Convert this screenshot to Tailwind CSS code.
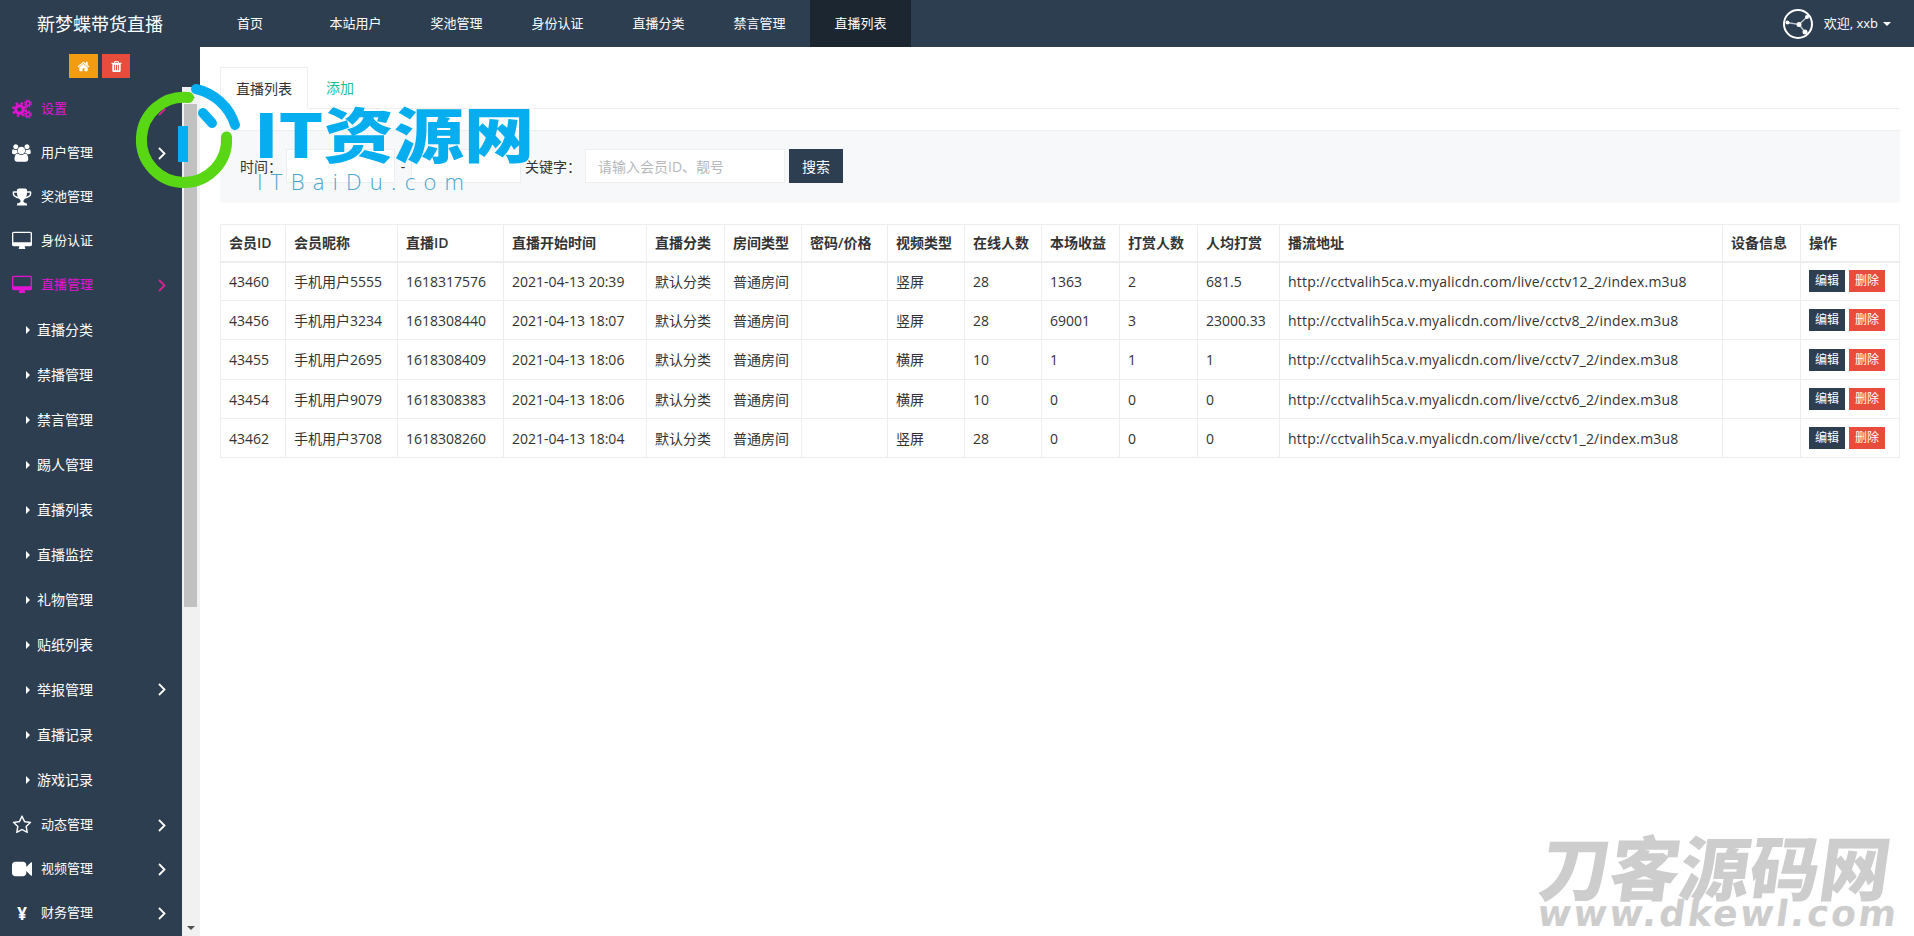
<!DOCTYPE html>
<html lang="zh-CN">
<head>
  <meta charset="UTF-8" />
  <title>直播列表</title>
  <script src="https://cdn.jsdelivr.net/npm/@tailwindcss/browser@4"></script>
</head>
<body class="relative h-[936px] w-[1914px] overflow-hidden bg-white text-[14px] text-[#333] font-['Open_Sans','Noto_Sans_CJK_SC',sans-serif]">

  <!-- HEADER -->
  <header class="flex h-[47px] items-center bg-[#2c3e50] text-white">
    <div class="w-[212px] pl-[37px] text-[18px] leading-none">新梦蝶带货直播</div>
    <nav class="flex h-full text-[13px]">
      <a class="flex w-[93px] items-center pl-[25px]">首页</a>
      <a class="flex w-[101px] items-center justify-center">本站用户</a>
      <a class="flex w-[101px] items-center justify-center">奖池管理</a>
      <a class="flex w-[101px] items-center justify-center">身份认证</a>
      <a class="flex w-[101px] items-center justify-center">直播分类</a>
      <a class="flex w-[101px] items-center justify-center">禁言管理</a>
      <a class="flex w-[101px] items-center justify-center bg-[#1b2631]">直播列表</a>
    </nav>
    <div class="ml-auto flex items-center pr-[23px]">
      <svg class="h-[30px] w-[30px]" viewBox="0 0 30 30" fill="none">
        <circle cx="15" cy="15" r="14" stroke="#fff" stroke-width="2" />
        <path d="M4 13.5L16 15.5L24 8M16 15.5L22 23" stroke="#b8c0c8" stroke-width="1.5" />
        <circle cx="4.5" cy="13.5" r="2" fill="#fff" />
        <circle cx="16" cy="15.5" r="2.5" fill="#fff" />
        <circle cx="24" cy="8" r="2" fill="#fff" />
        <circle cx="22" cy="23" r="2.5" fill="#fff" />
      </svg>
      <span class="ml-[11px] text-[13px]">欢迎, xxb</span>
      <span class="ml-[5px] h-0 w-0 border-x-[4px] border-t-[4px] border-x-transparent border-t-white"></span>
    </div>
  </header>

  <div class="flex h-[889px]">

    <!-- SIDEBAR -->
    <aside class="flex w-[200px] shrink-0 flex-col bg-[#2c3e50] text-white">
      <div class="flex h-[40px] gap-[4px] pl-[69px] pt-[7px]">
        <span class="flex h-[24px] w-[29px] items-center justify-center bg-[#f39c12]">
          <svg class="h-[13px] w-[13px]" viewBox="0 0 1792 1792" fill="#fff"><path d="M1472 992v480q0 26-19 45t-45 19h-384v-384h-256v384h-384q-26 0-45-19t-19-45v-480q0-1 .5-3t.5-3l575-474 575 474q1 2 1 6zm223-69l-62 74q-8 9-21 11h-3q-13 0-21-7l-692-577-692 577q-12 8-24 7-13-2-21-11l-62-74q-8-10-7-23.5t11-21.5l719-599q32-26 76-26t76 26l244 204v-195q0-14 9-23t23-9h192q14 0 23 9t9 23v408l219 182q10 8 11 21.5t-7 23.5z" /></svg>
        </span>
        <span class="flex h-[24px] w-[28px] items-center justify-center bg-[#e74c3c]">
          <svg class="h-[13px] w-[13px]" viewBox="0 0 1792 1792" fill="#fff"><path d="M704 1376v-704q0-14-9-23t-23-9h-64q-14 0-23 9t-9 23v704q0 14 9 23t23 9h64q14 0 23-9t9-23zm256 0v-704q0-14-9-23t-23-9h-64q-14 0-23 9t-9 23v704q0 14 9 23t23 9h64q14 0 23-9t9-23zm256 0v-704q0-14-9-23t-23-9h-64q-14 0-23 9t-9 23v704q0 14 9 23t23 9h64q14 0 23-9t9-23zm-544-992h448l-48-117q-7-9-17-11h-317q-10 2-17 11zm928 32v64q0 14-9 23t-23 9h-96v948q0 83-47 143.5t-113 60.5h-832q-66 0-113-58.5t-47-141.5v-952h-96q-14 0-23-9t-9-23v-64q0-14 9-23t23-9h309l70-167q15-37 54-63t79-26h320q40 0 79 26t54 63l70 167h309q14 0 23 9t9 23z" /></svg>
        </span>
      </div>

      <div class="flex min-h-0 flex-1">
        <ul id="menu" class="w-[182px] shrink-0 overflow-hidden"></ul>

        <!-- scrollbar -->
        <div class="flex w-[18px] flex-col bg-[#f1f1f1] pl-[2px] pr-[3px]">
          <div class="flex h-[17px] items-center justify-center">
            <span class="h-0 w-0 border-x-[4px] border-b-[4px] border-x-transparent border-b-[#505050]"></span>
          </div>
          <div class="h-[503px] bg-[#c1c1c1]"></div>
          <div class="mt-auto flex h-[17px] items-center justify-center">
            <span class="h-0 w-0 border-x-[4px] border-t-[4px] border-x-transparent border-t-[#505050]"></span>
          </div>
        </div>
      </div>
    </aside>

    <!-- MAIN CONTENT -->
    <main class="min-w-0 flex-1 pl-[20px] pr-[14px] pt-[20px]">
      <div class="flex h-[42px] border-b border-[#eee]">
        <a class="flex h-[42px] w-[88px] items-center justify-center border border-b-white border-[#eee] bg-white">直播列表</a>
        <a class="flex w-[64px] items-center justify-center text-[#1abc9c]">添加</a>
      </div>

      <form class="mt-[21px] flex h-[73px] items-center border-t border-[#eee] bg-[#f7f8fa] pb-[2px] pl-[20px]">
        <label class="w-[46px]">时间：</label>
        <input class="h-[34px] w-[109px] border border-[#eee] bg-white" />
        <span class="w-[16px] text-center">-</span>
        <input class="h-[34px] w-[110px] border border-[#eee] bg-white" />
        <label class="ml-[4px] w-[60px]">关键字：</label>
        <input class="h-[34px] w-[200px] border border-[#eee] bg-white px-[12px] placeholder:text-[#b5b9bd]" placeholder="请输入会员ID、靓号" />
        <button type="button" class="ml-[4px] h-[34px] w-[54px] bg-[#2c3e50] text-white">搜索</button>
      </form>

      <table class="mt-[21px] w-[1679px] table-fixed border-collapse">
        <thead>
          <tr id="head" class="h-[37px]"></tr>
        </thead>
        <tbody id="rows"></tbody>
      </table>
    </main>
  </div>

  <!-- LOGO WATERMARK -->
  <div class="pointer-events-none absolute left-[136px] top-[87px] h-[110px] w-[400px]">
    <svg class="absolute left-0 top-0 h-[102px] w-[104px] overflow-visible" viewBox="0 0 104 102" fill="none">
      <path d="M52.5 10.5A42.6 42.6 0 1 0 90.5 50" stroke="#5ad714" stroke-width="11" stroke-linecap="round" />
      <path d="M60 2A53 53 0 0 1 99 38" stroke="#06aeef" stroke-width="10" stroke-linecap="round" />
      <path d="M67 26L76 36" stroke="#06aeef" stroke-width="10" stroke-linecap="round" />
      <rect x="42" y="39" width="10" height="36" fill="#06aeef" />
    </svg>
    <div class="absolute left-[118px] top-[9px] origin-left scale-x-[1.17] whitespace-nowrap text-[60px] font-black leading-[72px] text-[#06aeef] font-['Noto_Sans_CJK_SC',sans-serif]">IT资源网</div>
    <div class="absolute left-[121px] top-[81px] whitespace-nowrap text-[22px] font-light leading-[26px] tracking-[8.3px] text-[#4ba6cf] font-['Open_Sans',sans-serif]">ITBaiDu.com</div>
  </div>

  <div class="pointer-events-none absolute left-[1541px] top-[830px] w-[360px] text-[#cdcdcd]">
    <div class="-skew-x-[8deg] whitespace-nowrap text-[70px] font-black leading-[70px] font-['Noto_Sans_CJK_SC',sans-serif]">刀客源码网</div>
    <div class="-ml-[3px] -skew-x-[8deg] whitespace-nowrap text-[36px] font-bold leading-[27px] tracking-[2.6px] font-['DejaVu_Sans',sans-serif]">www.dkewl.com</div>
  </div>

  <!-- SCRIPTS -->
  <script>
    const fa = {
      users: ['-64 0 2048 1792', 'M529 896q-162 5-265 128h-134q-82 0-138-40.5t-56-118.5q0-353 124-353 6 0 43.5 21t97.5 42.5 119 21.5q67 0 133-23-5 37-5 66 0 139 81 256zm1071 637q0 120-73 189.5t-194 69.5h-874q-121 0-194-69.5t-73-189.5q0-53 3.5-103.5t14-109 26.5-108.5 43-97.5 62-81 85.5-53.5 111.5-20q10 0 43 21.5t73 48 107 48 135 21.5 135-21.5 107-48 73-48 43-21.5q61 0 111.5 20t85.5 53.5 62 81 43 97.5 26.5 108.5 14 109 3.5 103.5zm-1024-1277q0 106-75 181t-181 75-181-75-75-181 75-181 181-75 181 75 75 181zm704 384q0 159-112.5 271.5t-271.5 112.5-271.5-112.5-112.5-271.5 112.5-271.5 271.5-112.5 271.5 112.5 112.5 271.5zm576 225q0 78-56 118.5t-138 40.5h-134q-103-123-265-128 81-117 81-256 0-29-5-66 66 23 133 23 59 0 119-21.5t97.5-42.5 43.5-21q124 0 124 353zm-128-609q0 106-75 181t-181 75-181-75-75-181 75-181 181-75 181 75 75 181z'],
      trophy: ['0 0 1792 1792', 'M522 883q-74-162-74-371h-256v96q0 78 94.5 162t235.5 113zm1078-275v-96h-256q0 209-74 371 141-29 235.5-113t94.5-162zm128-128v128q0 71-41.5 143t-112 130-173 97.5-215.5 44.5q-42 54-95 95-38 34-52.5 72.5t-14.5 89.5q0 54 30.5 91t97.5 37q75 0 133.5 45.5t58.5 114.5v64q0 14-9 23t-23 9h-832q-14 0-23-9t-9-23v-64q0-69 58.5-114.5t133.5-45.5q67 0 97.5-37t30.5-91q0-51-14.5-89.5t-52.5-72.5q-53-41-95-95-113-5-215.5-44.5t-173-97.5-112-130-41.5-143v-128q0-40 28-68t68-28h288v-96q0-66 47-113t113-47h576q66 0 113 47t47 113v96h288q40 0 68 28t28 68z'],
      desktop: ['0 0 1920 1792', 'M1792 992v-832q0-13-9.5-22.5t-22.5-9.5h-1600q-13 0-22.5 9.5t-9.5 22.5v832q0 13 9.5 22.5t22.5 9.5h1600q13 0 22.5-9.5t9.5-22.5zm128-832v1088q0 66-47 113t-113 47h-544q0 37 16 77.5t32 71 16 43.5q0 26-19 45t-45 19h-512q-26 0-45-19t-19-45q0-14 16-44t32-70 16-78h-544q-66 0-113-47t-47-113v-1088q0-66 47-113t113-47h1600q66 0 113 47t47 113z'],
      star: ['0 0 1792 1792', 'M1201 1004l306-297-422-62-189-382-189 382-422 62 306 297-73 421 378-199 377 199zm527-357q0 22-26 48l-363 354 86 500q1 7 1 20 0 50-41 50-19 0-40-12l-449-236-449 236q-22 12-40 12-21 0-31.5-14.5t-10.5-35.5q0-6 2-20l86-500-364-354q-25-27-25-48 0-37 56-46l502-73 225-455q19-41 49-41t49 41l225 455 502 73q56 9 56 46z'],
      video: ['0 0 1792 1792', 'M1792 352v1088q0 42-39 59-13 5-25 5-27 0-45-19l-403-403v166q0 119-84.5 203.5t-203.5 84.5h-704q-119 0-203.5-84.5t-84.5-203.5v-704q0-119 84.5-203.5t203.5-84.5h704q119 0 203.5 84.5t84.5 203.5v165l403-402q18-19 45-19 12 0 25 5 39 17 39 59z'],
    };

    function icon(name) {
      if (name === 'cogs') {
        return `<svg class="h-[20px] w-[20px]" viewBox="0 0 20 20" fill="none" stroke="currentColor">
          <circle cx="7.5" cy="10.5" r="3.8" stroke-width="3" />
          <circle cx="7.5" cy="10.5" r="6.3" stroke-width="2.4" stroke-dasharray="2.4 2.6" />
          <circle cx="16" cy="4.5" r="2" stroke-width="1.6" />
          <circle cx="16" cy="4.5" r="3.3" stroke-width="1.4" stroke-dasharray="1.4 1.2" />
          <circle cx="16" cy="15.5" r="2" stroke-width="1.6" />
          <circle cx="16" cy="15.5" r="3.3" stroke-width="1.4" stroke-dasharray="1.4 1.2" />
        </svg>`;
      }
      if (name === 'yen') {
        return `<span class="w-[20px] text-center text-[17px] font-bold leading-none">¥</span>`;
      }
      const [box, d] = fa[name];
      return `<svg class="h-[20px] w-[20px]" viewBox="${box}" fill="currentColor"><path d="${d}" /></svg>`;
    }

    const chevron = (active) => `<svg class="absolute left-[158px] h-[13px] w-[8px] ${active ? 'text-[#d6248f]' : ''}" viewBox="0 0 8 13" fill="none" stroke="currentColor" stroke-width="1.8"><path d="M1 1l5.5 5.5L1 12" /></svg>`;

    // [text, icon, has chevron, active]
    const top1 = [
      ['设置', 'cogs', true, true],
      ['用户管理', 'users', true],
      ['奖池管理', 'trophy'],
      ['身份认证', 'desktop'],
      ['直播管理', 'desktop', true, true],
    ];
    const subs = [
      ['直播分类'], ['禁播管理'], ['禁言管理'], ['踢人管理'], ['直播列表'], ['直播监控'],
      ['礼物管理'], ['贴纸列表'], ['举报管理', true], ['直播记录'], ['游戏记录'],
    ];
    const top2 = [
      ['动态管理', 'star', true],
      ['视频管理', 'video', true],
      ['财务管理', 'yen', true],
    ];

    const topRow = ([text, ic, more, active]) => `<li class="relative flex h-[44px] items-center pl-[12px] text-[13px] ${active ? 'text-[#e313d3]' : 'text-white'}">
      ${icon(ic)}<span class="ml-[9px]">${text}</span>${more ? chevron(active) : ''}</li>`;
    const subRow = ([text, more]) => `<li class="relative flex h-[45px] items-center pl-[26px] text-[14px] text-white">
      <span class="h-0 w-0 border-y-[4px] border-l-[4px] border-y-transparent border-l-white"></span>
      <span class="ml-[7px]">${text}</span>${more ? chevron() : ''}</li>`;

    document.getElementById('menu').innerHTML =
      top1.map(topRow).join('') + subs.map(subRow).join('') + `<li class="h-[1px]"></li>` + top2.map(topRow).join('');

    const columns = [
      ['会员ID', 65], ['会员昵称', 112], ['直播ID', 106], ['直播开始时间', 143], ['直播分类', 78],
      ['房间类型', 77], ['密码/价格', 86], ['视频类型', 77], ['在线人数', 77], ['本场收益', 78],
      ['打赏人数', 78], ['人均打赏', 82], ['播流地址', 443], ['设备信息', 78], ['操作', 99],
    ];
    document.getElementById('head').innerHTML = columns.map(([name, w]) =>
      `<th class="border border-b-2 border-[#eee] px-[8px] text-left font-semibold" style="width:${w}px">${name}</th>`).join('');

    const data = [
      ['43460', '手机用户5555', '1618317576', '2021-04-13 20:39', '竖屏', '28', '1363', '2', '681.5', 'cctv12_2', 'h-[39px]'],
      ['43456', '手机用户3234', '1618308440', '2021-04-13 18:07', '竖屏', '28', '69001', '3', '23000.33', 'cctv8_2', 'h-[39px]'],
      ['43455', '手机用户2695', '1618308409', '2021-04-13 18:06', '横屏', '10', '1', '1', '1', 'cctv7_2', 'h-[40px]'],
      ['43454', '手机用户9079', '1618308383', '2021-04-13 18:06', '横屏', '10', '0', '0', '0', 'cctv6_2', 'h-[39px]'],
      ['43462', '手机用户3708', '1618308260', '2021-04-13 18:04', '竖屏', '28', '0', '0', '0', 'cctv1_2', 'h-[39px]'],
    ];
    const td = (html) => `<td class="border border-[#eee] px-[8px] whitespace-nowrap">${html}</td>`;
    document.getElementById('rows').innerHTML = data.map((r) => `<tr class="${r[10]}">` + [
      r[0], r[1], r[2], r[3], '默认分类', '普通房间', '', r[4], r[5], r[6], r[7], r[8],
      `<span class="tracking-[0.2px]">http://cctvalih5ca.v.myalicdn.com/live/${r[9]}/index.m3u8</span>`, '',
      `<span class="flex gap-[4px] text-[12px] text-white"><a class="flex h-[22px] w-[36px] items-center justify-center bg-[#2c3e50]">编辑</a><a class="flex h-[22px] w-[36px] items-center justify-center bg-[#e74c3c]">删除</a></span>`,
    ].map(td).join('') + `</tr>`).join('');
  </script>
</body>
</html>
